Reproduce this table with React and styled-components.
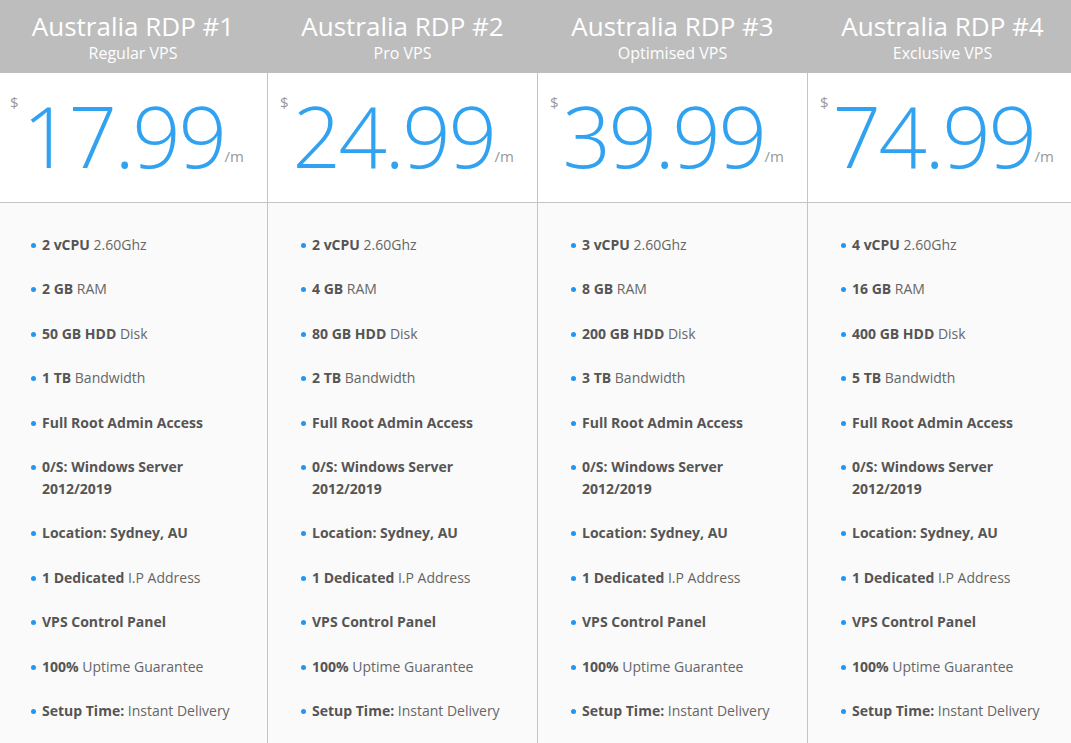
import React from 'react';
import styled, { createGlobalStyle } from 'styled-components';

const GlobalStyle = createGlobalStyle`
  body {
    margin: 0;
    background: #fafafa;
    font-family: 'Open Sans', 'Liberation Sans', sans-serif;
    overflow: hidden;
  }
`;

const plans = [
  { title: 'Australia RDP #1', sub: 'Regular VPS', price: '17.99', cpu: '2', ram: '2', disk: '50', bw: '1' },
  { title: 'Australia RDP #2', sub: 'Pro VPS', price: '24.99', cpu: '2', ram: '4', disk: '80', bw: '2' },
  { title: 'Australia RDP #3', sub: 'Optimised VPS', price: '39.99', cpu: '3', ram: '8', disk: '200', bw: '3' },
  { title: 'Australia RDP #4', sub: 'Exclusive VPS', price: '74.99', cpu: '4', ram: '16', disk: '400', bw: '5' },
];

const Table = styled.div`
  display: grid;
  grid-template-columns: repeat(4, 270px);
  width: 1080px;
  margin-left: -2px;
`;

const Column = styled.div`
  display: flex;
  flex-direction: column;
  border-left: ${(p) => (p.first ? 'none' : '1px solid #c4c4c4')};
  margin-left: ${(p) => (p.first ? '0' : '-1px')};
`;

const Header = styled.div`
  background: #bdbdbd;
  height: 73px;
  color: #fff;
  text-align: center;
  margin-left: ${(p) => (p.first ? '0' : '-1px')};
  padding-top: 9px;
  box-sizing: border-box;
`;

const Title = styled.div`
  font-size: 26px;
  line-height: 34px;
`;

const Sub = styled.div`
  font-size: 16px;
  line-height: 20px;
`;

const PriceBox = styled.div`
  background: #fff;
  height: 130px;
  border-bottom: 1px solid #c4c4c4;
  display: flex;
  align-items: flex-start;
  padding: 18px 0 0 12px;
  box-sizing: border-box;
  color: #999;
`;

const Dollar = styled.span`
  font-size: 15px;
  line-height: 20px;
  margin-top: 1px;
`;

const Amount = styled.span`
  font-size: 85px;
  font-weight: 300;
  line-height: 88px;
  color: #31a2f0;
  letter-spacing: -2.5px;
  margin-left: 4px;
`;

const Per = styled.span`
  font-size: 15px;
  margin-top: 55px;
  margin-left: 0;
`;

const Features = styled.ul`
  list-style: none;
  margin: 0;
  padding: 31px 20px 20px 33px;
  min-height: 560px;
`;

const Item = styled.li`
  position: relative;
  padding-left: 11px;
  font-size: 14px;
  line-height: 22px;
  color: #666;
  margin-bottom: 22.4px;
  &::before {
    content: '';
    position: absolute;
    left: 0;
    top: 9px;
    width: 5px;
    height: 5px;
    border-radius: 50%;
    background: #2196f3;
  }
  b {
    color: #555;
    font-weight: 700;
  }
`;

function Plan({ plan, first }) {
  return (
    <Column first={first}>
      <Header first={first}>
        <Title>{plan.title}</Title>
        <Sub>{plan.sub}</Sub>
      </Header>
      <PriceBox>
        <Dollar>$</Dollar>
        <Amount>{plan.price}</Amount>
        <Per>/m</Per>
      </PriceBox>
      <Features>
        <Item><b>{plan.cpu} vCPU</b> 2.60Ghz</Item>
        <Item><b>{plan.ram} GB</b> RAM</Item>
        <Item><b>{plan.disk} GB HDD</b> Disk</Item>
        <Item><b>{plan.bw} TB</b> Bandwidth</Item>
        <Item><b>Full Root Admin Access</b></Item>
        <Item><b>0/S: Windows Server 2012/2019</b></Item>
        <Item><b>Location: Sydney, AU</b></Item>
        <Item><b>1 Dedicated</b> I.P Address</Item>
        <Item><b>VPS Control Panel</b></Item>
        <Item><b>100%</b> Uptime Guarantee</Item>
        <Item><b>Setup Time:</b> Instant Delivery</Item>
      </Features>
    </Column>
  );
}

export default function App() {
  return (
    <>
      <GlobalStyle />
      <Table>
        {plans.map((p, i) => (
          <Plan key={p.title} plan={p} first={i === 0} />
        ))}
      </Table>
    </>
  );
}
